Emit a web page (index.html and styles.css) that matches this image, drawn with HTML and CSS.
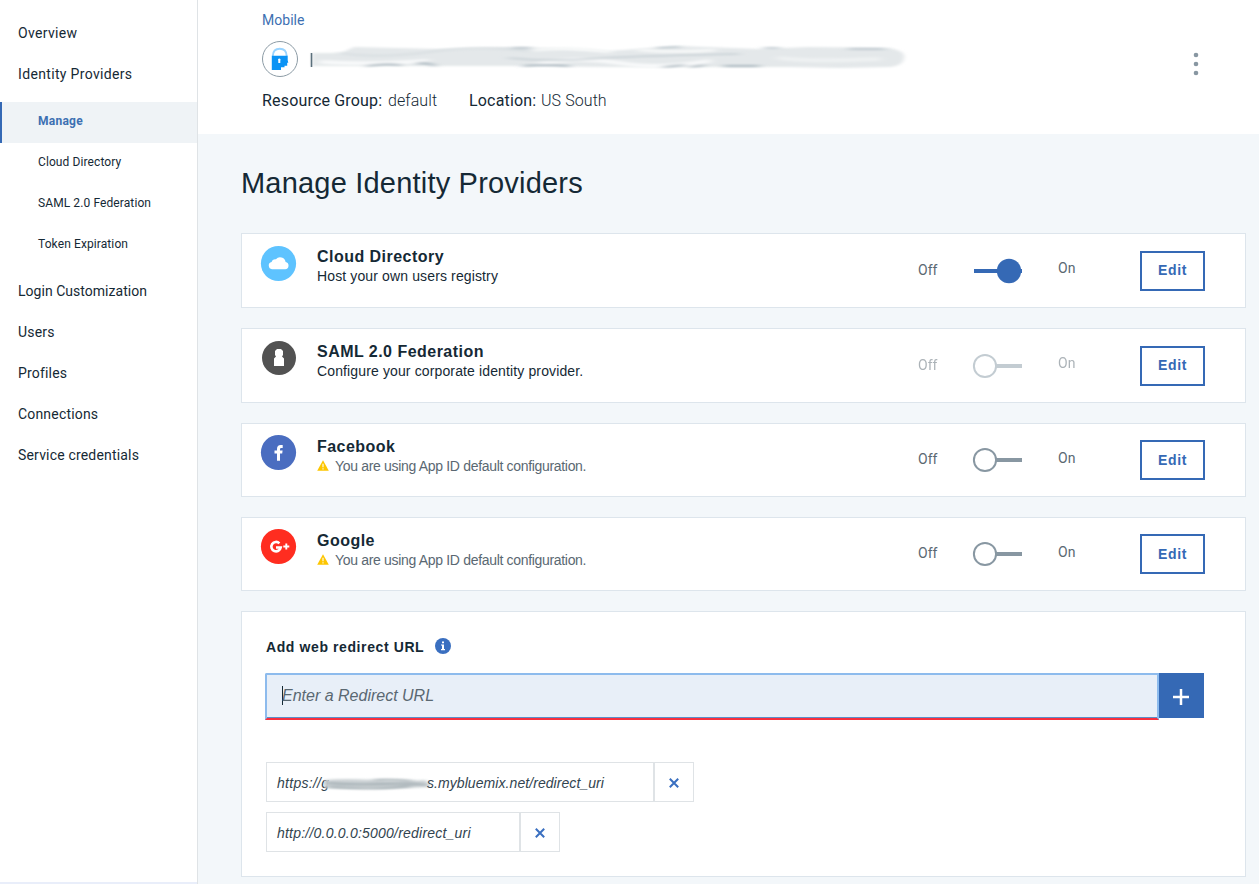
FILE: index.html
```html
<!DOCTYPE html>
<html lang="en">
<head>
<meta charset="utf-8">
<title>Manage Identity Providers</title>
<link rel="stylesheet" href="styles.css">
</head>
<body>
<div class="app">
  <nav class="sidebar">
    <a class="nav-item">Overview</a>
    <a class="nav-item">Identity Providers</a>
    <div class="subnav">
      <a class="sub-item active">Manage</a>
      <a class="sub-item">Cloud Directory</a>
      <a class="sub-item">SAML 2.0 Federation</a>
      <a class="sub-item">Token Expiration</a>
    </div>
    <a class="nav-item t-login">Login Customization</a>
    <a class="nav-item t-users">Users</a>
    <a class="nav-item t-users">Profiles</a>
    <a class="nav-item t-users">Connections</a>
    <a class="nav-item t-users">Service credentials</a>
  </nav>
  <div class="content">
    <header class="header">
      <div class="header-main">
        <a class="crumb">Mobile</a>
        <div class="service">
          <svg class="service-icon" width="36" height="36" viewBox="0 0 36 36">
            <circle cx="18" cy="18" r="17.5" fill="#fff" stroke="#8c9ba5"/>
            <path d="M10.800 15C11 10 14 7.800 17.700 7.800s6.800 2.200 7 7.200" fill="none" stroke="#9ad4ff" stroke-width="1.900"/>
            <path d="M9.800 14.800H25.700V19.200L26.300 21.800H25.200V24.800H22.500V26.200H19V29H9.800Z" fill="#0b93f5"/>
            <path d="M17.300 17.500a1.300 1.300 0 0 1 1 2.100V22h-2v-2.400a1.300 1.300 0 0 1 1-2.100z" fill="#fff"/>
          </svg>
          <svg class="smear" width="600" height="30" viewBox="0 0 600 30">
            <defs>
              <filter id="soft" x="-5%" y="-50%" width="110%" height="200%"><feGaussianBlur stdDeviation="2 1.200"/></filter>
              <filter id="line" x="-5%" y="-200%" width="110%" height="500%"><feGaussianBlur stdDeviation="4 .9"/></filter>
            </defs>
            <path d="M3 9L32 9L45 3L130 5L210 3L300 7L370 2L450 5L500 3L580 4Q597 7 595 14Q594 22 580 23L530 24L480 23L300 23L200 22L120 22L3 22Z" fill="#e4e8ea" filter="url(#soft)"/>
            <g filter="url(#line)" fill="none" stroke-linecap="round">
              <path d="M12 18Q60 21 118 17M230 20Q270 12 310 19T400 17" stroke="#f8f9fa" stroke-width="4"/>
              <path d="M225 6Q260 2 300 8M330 6Q370 9 405 6" stroke="#f6f8f8" stroke-width="3"/>
              <path d="M30 9Q70 15 120 8T220 7" stroke="#d9dfe2" stroke-width="2"/>
              <path d="M200 14Q240 18 280 15T430 10" stroke="#c6cfd4" stroke-width="1.500"/>
              <path d="M58 22Q75 19 92 21M108 20Q116 17 126 22M215 22Q235 20 260 22M355 23L375 21M382 23L395 21M415 22L450 22" stroke="#98a8b2" stroke-width="1.500"/>
              <path d="M204 4L222 4M348 4L370 3M455 4L470 4M540 5H575" stroke="#b4c0c7" stroke-width="1.300"/>
              <path d="M470 14Q500 18 570 15" stroke="#eef1f2" stroke-width="4"/>
            </g>
            <path d="M2.500 9V23" stroke="#5b707c" stroke-width="1.600"/>
          </svg>
        </div>
        <div class="meta">
          <span class="meta-key">Resource Group:</span><span class="meta-value">default</span>
          <span class="meta-key k-loc">Location:</span><span class="meta-value">US South</span>
        </div>
      </div>
      <svg class="kebab" width="6" height="24" viewBox="0 0 6 24" fill="#8897a2"><circle cx="3" cy="3" r="2.300"/><circle cx="3" cy="12" r="2.300"/><circle cx="3" cy="21" r="2.300"/></svg>
    </header>
    <main class="main">
      <h1 class="title">Manage Identity Providers</h1>
      <div class="cards">
        <section class="card">
          <svg class="logo" width="37" height="37" viewBox="0 0 37 37"><circle cx="18.500" cy="18.500" r="17.600" fill="#5ec3ff"/><path d="M12 24.200a3.600 3.600 0 0 1-.4-7.100a4 4 0 0 1 4.300-2.800a5.600 5.600 0 0 1 9.700 2.600a3.700 3.700 0 0 1-.4 7.300z" fill="#fff"/></svg>
          <div class="info"><h2 class="name">Cloud Directory</h2><p class="desc">Host your own users registry</p></div>
          <span class="off">Off</span>
          <svg class="toggle" width="50" height="26" viewBox="0 0 50 26"><path d="M2 11H50V15H2z" fill="#3569b5"/><circle cx="37" cy="13" r="12.200" fill="#3569b5"/></svg>
          <span class="on">On</span><button class="edit">Edit</button>
        </section>
        <section class="card">
          <svg class="logo" width="37" height="37" viewBox="0 0 37 37"><circle cx="19" cy="18" r="17" fill="#525252"/><path d="M17 8.900h4l2 2v4l-1 1.700 2 2V26H14v-7.400l2-2-1-1.700v-4z" fill="#fff"/></svg>
          <div class="info"><h2 class="name">SAML 2.0 Federation</h2><p class="desc">Configure your corporate identity provider.</p></div>
          <span class="off dim">Off</span>
          <svg class="toggle" width="50" height="26" viewBox="0 0 50 26"><path d="M24 11H50V15H24z" fill="#c3ccd2"/><circle cx="13" cy="13" r="11.100" fill="#fff" stroke="#c3ccd2" stroke-width="2"/></svg>
          <span class="on dim">On</span><button class="edit">Edit</button>
        </section>
        <section class="card compact">
          <svg class="logo" width="37" height="37" viewBox="0 0 37 37"><circle cx="18.500" cy="18.500" r="17.600" fill="#4a6dc0"/><path d="M17 26.800V19.600h-2.500v-3H17V15c0-2.700 1.400-4 3.700-4h2v2.900h-1.200c-1.200 0-1.500.5-1.500 1.500v1.200h2.600l-.4 3H20v7.200z" fill="#fff"/></svg>
          <div class="info"><h2 class="name">Facebook</h2><p class="desc warn"><svg class="warn-icon" width="12" height="11" viewBox="0 0 12 11"><path d="M6 .3L11.800 10.800H.2z" fill="#fdc600"/><path d="M6 3.800V7.300M6 8.300V9.500" stroke="#fff" stroke-width="1.100"/></svg>You are using App ID default configuration.</p></div>
          <span class="off">Off</span>
          <svg class="toggle" width="50" height="26" viewBox="0 0 50 26"><path d="M24 11H50V15H24z" fill="#8897a2"/><circle cx="13" cy="13" r="11.100" fill="#fff" stroke="#8897a2" stroke-width="2"/></svg>
          <span class="on">On</span><button class="edit">Edit</button>
        </section>
        <section class="card compact">
          <svg class="logo" width="37" height="37" viewBox="0 0 37 37"><circle cx="18.500" cy="18.500" r="17.600" fill="#ff2d20"/><path d="M19.400 15.300A4.700 4.700 0 1 0 20.700 19.500H16" fill="none" stroke="#fff" stroke-width="2.600"/><path d="M26.300 15.500v6M23.300 18.500h6" stroke="#fff" stroke-width="1.900"/></svg>
          <div class="info"><h2 class="name">Google</h2><p class="desc warn"><svg class="warn-icon" width="12" height="11" viewBox="0 0 12 11"><path d="M6 .3L11.800 10.800H.2z" fill="#fdc600"/><path d="M6 3.800V7.300M6 8.300V9.500" stroke="#fff" stroke-width="1.100"/></svg>You are using App ID default configuration.</p></div>
          <span class="off">Off</span>
          <svg class="toggle" width="50" height="26" viewBox="0 0 50 26"><path d="M24 11H50V15H24z" fill="#8897a2"/><circle cx="13" cy="13" r="11.100" fill="#fff" stroke="#8897a2" stroke-width="2"/></svg>
          <span class="on">On</span><button class="edit">Edit</button>
        </section>
        <section class="panel">
          <div class="panel-head"><h3 class="panel-title">Add web redirect URL</h3>
            <svg class="info-icon" width="16" height="16" viewBox="0 0 16 16"><circle cx="8" cy="8" r="8" fill="#3a6fc0"/><path d="M7 3.500H9V5.200H7zM6 6.500H9V11H10V12.200H6V11H7V7.600H6z" fill="#fff"/></svg></div>
          <div class="url-row">
            <div class="url-input"><span class="caret"></span><span class="placeholder">Enter a Redirect URL</span></div>
            <button class="add"><svg width="18" height="18" viewBox="0 0 18 18"><path d="M9 1V17M1 9H17" stroke="#fff" stroke-width="2.500"/></svg></button>
          </div>
          <div class="uris">
            <div class="uri first"><span class="uri-text u-start">https://g</span><svg class="uri-smear" width="106" height="16" viewBox="0 0 106 16"><path d="M0 4Q20 2 50 4T102 4L106 11Q70 13 40 12L0 12z" fill="#cdd3d6" filter="url(#soft)"/><path d="M2 7Q30 9 58 8T103 9M50 4Q65 3 88 5M5 11Q55 14 86 10" fill="none" stroke="#a2adb2" stroke-width="1.800" filter="url(#line)"/></svg><span class="uri-text u-end">s.mybluemix.net/redirect_uri</span><button class="remove"><svg width="10" height="10" viewBox="0 0 10 10"><path d="M.8.8L9.200 9.200M9.200.8L.8 9.200" stroke="#3a6fc0" stroke-width="2"/></svg></button></div>
            <div class="uri second"><span class="uri-text u-local">http://0.0.0.0:5000/redirect_uri</span><button class="remove"><svg width="10" height="10" viewBox="0 0 10 10"><path d="M.8.8L9.200 9.200M9.200.8L.8 9.200" stroke="#3a6fc0" stroke-width="2"/></svg></button></div>
          </div>
        </section>
      </div>
    </main>
  </div>
</div>
</body>
</html>
```
FILE: styles.css
```css
* { box-sizing: border-box; }
body { margin: 0; background: #f3f7fa; color: #152935; font-family: "Liberation Sans", Arial, sans-serif; overflow: hidden; }
h1, h2, h3, p { margin: 0; }
button { margin: 0; padding: 0; font: inherit; border: 0; background: none; }
svg { display: block; flex: none; }
.app { display: flex; height: 884px; }
.sidebar { width: 198px; flex: none; background: #fff; border-right: 1px solid #dfe3e6; box-shadow: inset 0 -2px #e9eefa; padding-top: 13px; font-family: Roboto, sans-serif; white-space: nowrap; }
.nav-item { display: block; height: 41px; line-height: 41px; padding-left: 18px; font-size: 14px; letter-spacing: .34px; }
.t-login { letter-spacing: .03px; }
.t-users { letter-spacing: .18px; }
.subnav { margin: 7px 0 5px; }
.sub-item { display: block; height: 41px; line-height: 39px; padding-left: 38px; font-size: 12px; letter-spacing: .1px; }
.active { background: #eff3f6; box-shadow: inset 2px 0 #3569b5; color: #3d70b2; font-weight: 700; letter-spacing: .25px; }
.header { height: 134px; background: #fff; padding: 10px 60px 0 64px; display: flex; justify-content: space-between; font-family: Roboto, sans-serif; }
.content { flex: 1; min-width: 0; }
.crumb { display: block; height: 20px; line-height: 20px; font-size: 14px; color: #3d70b2; letter-spacing: .03px; }
.service { display: flex; margin-top: 11px; height: 36px; }
.smear { margin: 3px 0 0 11px; }
.meta { display: flex; margin-top: 14px; line-height: 20px; font-size: 16px; white-space: nowrap; }
.meta-key { width: 126px; letter-spacing: .18px; }
.meta-value { width: 81px; font-weight: 300; letter-spacing: .08px; }
.k-loc { width: 72px; }
.kebab { margin-top: 42px; }
.main { padding: 29px 13px 0 43px; }
.title { font-size: 29px; font-weight: 400; line-height: 41px; letter-spacing: .2px; margin-bottom: 29px; }
.cards { display: flex; flex-direction: column; gap: 20px; }
.card { height: 75px; background: #fff; border: 1px solid #dde5ec; display: grid; grid-template-columns: 57px 601px 54px 86px 82px 65px; padding: 11px 0 0 18px; align-items: start; white-space: nowrap; }
.compact { height: 74px; padding-top: 10px; }
.info { padding-top: 2px; }
.compact .info { padding-top: 3px; }
.name { font-size: 16px; line-height: 20px; height: 19px; letter-spacing: .47px; }
.desc { font-size: 14px; line-height: 20px; letter-spacing: .13px; }
.warn { display: flex; color: #5a6872; letter-spacing: -.32px; }
.warn-icon { margin: 4px 6px 0 0; }
.off, .on { font-family: Roboto, sans-serif; font-size: 14px; line-height: 20px; color: #5a6872; }
.off { margin-top: 15px; }
.on { margin-top: 13px; }
.compact .on { margin-top: 14px; }
.dim { opacity: .5; }
.toggle { margin-top: 13px; }
.edit { width: 65px; height: 40px; margin-top: 6px; border: 2px solid #3569b5; color: #3569b5; font-size: 14px; font-weight: 700; letter-spacing: .7px; line-height: 16px; padding-bottom: 2px; }
.compact .edit { padding-bottom: 0; }
.panel { height: 266px; background: #fff; border: 1px solid #dde5ec; padding: 25px 41px 0 24px; }
.panel-head { display: flex; height: 20px; }
.panel-title { width: 169px; font-size: 14px; line-height: 20px; letter-spacing: .6px; white-space: nowrap; }
.info-icon { margin-top: 1px; }
.url-row { display: flex; margin-top: 16px; height: 47px; }
.url-input { display: flex; flex: 1; height: 47px; background: #e8eff8; border: 2px solid #8dbbed; border-bottom: 2px solid #f72f3e; box-shadow: inset 0 -1px #5b8fc8; padding: 11px 0 0 15px; border-radius: 2px 0 0 0; margin-left: -1px; }
.caret { width: 1px; height: 19px; background: #152935; }
.placeholder { font-size: 16px; font-style: italic; line-height: 20px; color: #5a6872; margin-left: -1px; }
.add { width: 45px; height: 45px; background: #3569b5; display: grid; place-items: center; padding: 3px 1px 0 0; }
.uris { margin-top: 42px; display: grid; gap: 10px; }
.uri { height: 40px; border: 1px solid #dfe3e6; display: flex; padding: 10px 0 0 10px; font-size: 14px; font-style: italic; line-height: 20px; white-space: nowrap; color: #32444f; }
.first { width: 428px; }
.second { width: 294px; }
.u-start { width: 52px; letter-spacing: .28px; }
.u-end { letter-spacing: .07px; }
.u-local { letter-spacing: .22px; }
.uri-smear { margin: 3px -3px 0 -5px; }
.remove { width: 40px; height: 38px; margin: -10px 0 0 auto; border-left: 2px solid #dfe3e6; display: grid; place-items: center; padding-top: 2px; }
```
